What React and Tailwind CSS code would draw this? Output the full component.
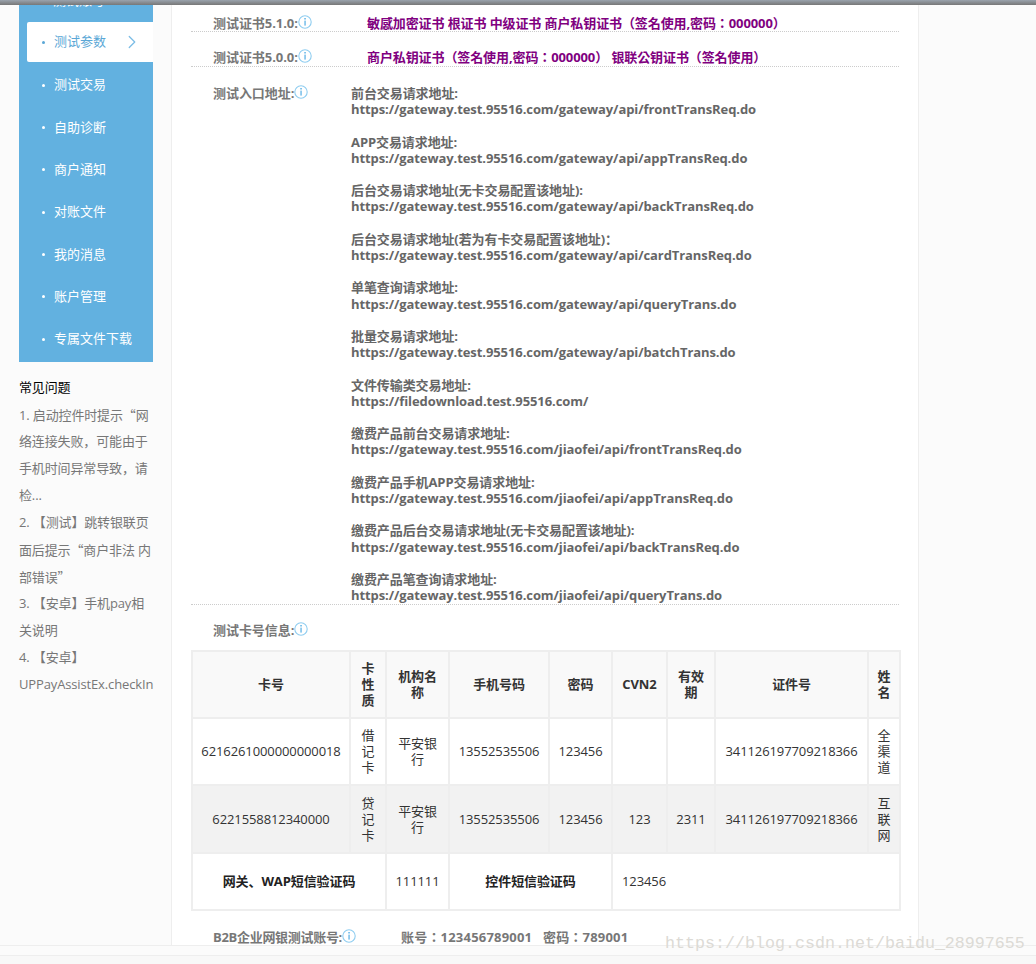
import { ChevronRight } from "lucide-react";

const FONT = "[font-family:'Open_Sans','Noto_Sans_CJK_SC',sans-serif]";
const TC_FONT = "[font-family:'Open_Sans','Noto_Sans_CJK_TC',sans-serif]";

const navItems = ["测试交易", "自助诊断", "商户通知", "对账文件", "我的消息", "账户管理", "专属文件下载"];

// curly quotes take the full em in the original, Open Sans would make them narrow
const Q = ({ children }) => <span className="[font-family:'Noto_Sans_CJK_SC',sans-serif]">{children}</span>;

const faqLines = [
  <>1. 启动控件时提示<Q>“</Q>网</>,
  "络连接失败，可能由于",
  "手机时间异常导致，请",
  "检...",
  "2. 【测试】跳转银联页",
  <>面后提示<Q>“</Q>商户非法 内</>,
  <>部错误<Q>”</Q></>,
  "3. 【安卓】手机pay相",
  "关说明",
  "4. 【安卓】",
  "UPPayAssistEx.checkIn",
];

const endpoints = [
  ["前台交易请求地址:", "https://gateway.test.95516.com/gateway/api/frontTransReq.do"],
  ["APP交易请求地址:", "https://gateway.test.95516.com/gateway/api/appTransReq.do"],
  ["后台交易请求地址(无卡交易配置该地址):", "https://gateway.test.95516.com/gateway/api/backTransReq.do"],
  ["后台交易请求地址(若为有卡交易配置该地址)：", "https://gateway.test.95516.com/gateway/api/cardTransReq.do"],
  ["单笔查询请求地址:", "https://gateway.test.95516.com/gateway/api/queryTrans.do"],
  ["批量交易请求地址:", "https://gateway.test.95516.com/gateway/api/batchTrans.do"],
  ["文件传输类交易地址:", "https://filedownload.test.95516.com/"],
  ["缴费产品前台交易请求地址:", "https://gateway.test.95516.com/jiaofei/api/frontTransReq.do"],
  ["缴费产品手机APP交易请求地址:", "https://gateway.test.95516.com/jiaofei/api/appTransReq.do"],
  ["缴费产品后台交易请求地址(无卡交易配置该地址):", "https://gateway.test.95516.com/jiaofei/api/backTransReq.do"],
  ["缴费产品笔查询请求地址:", "https://gateway.test.95516.com/jiaofei/api/queryTrans.do"],
];

const columns = [158, 36, 63, 100, 63, 55, 48, 153, 32];
const headers = ["卡号", "卡性质", "机构名称", "手机号码", "密码", "CVN2", "有效期", "证件号", "姓名"];

const cards = [
  ["6216261000000000018", "借记卡", "平安银行", "13552535506", "123456", "", "", "341126197709218366", "全渠道"],
  ["6221558812340000", "贷记卡", "平安银行", "13552535506", "123456", "123", "2311", "341126197709218366", "互联网"],
];

const InfoIcon = () => (
  <svg width="14" height="14" viewBox="0 0 14 14" className="shrink-0" fill="none">
    <circle cx="7" cy="7" r="6.2" stroke="#8fcdf0" strokeWidth="1.1" />
    <rect x="6.3" y="3" width="1.5" height="1.5" fill="#5fb3e6" />
    <rect x="6.4" y="5.6" width="1.3" height="5" fill="#5fb3e6" />
  </svg>
);

const Label = ({ children }) => (
  <span className="flex items-start text-[13px] leading-[17px] font-bold tracking-[-0.06px] text-[#777] whitespace-nowrap">
    {children}
    <InfoIcon />
  </span>
);

const Sidebar = () => (
  <aside className="w-[171px] shrink-0 pl-[19px] pr-[18px]">
    <div className="bg-[#62b1e0] pl-2 pb-[2px] text-[13px] text-white">
      <div className="h-[17px] overflow-hidden pl-[26px]">
        <div className="-mt-[13px] leading-[17px]">测试账号</div>
      </div>
      <div className="flex h-10 items-center rounded-l-[2px] bg-white pl-[15px] text-[#5aa7d6]">
        <span className="mr-2 h-[3px] w-[3px] rounded-full bg-[#5aa7d6]" />
        <span className="w-[68px] pl-[1px]">测试参数</span>
        <ChevronRight size={22} strokeWidth={1.4} className="text-[#7cbde6]" />
      </div>
      <div className="pt-[2px]">
        {navItems.map((item) => (
          <div key={item} className="flex h-[42.35px] items-center pl-[15px]">
            <span className="mr-2 h-[3px] w-[3px] rounded-full bg-white" />
            <span className="pl-[1px]">{item}</span>
          </div>
        ))}
      </div>
    </div>
    <div className="pt-[12px] text-[13px] leading-[27px] tracking-[-0.14px] whitespace-nowrap">
      <div className="h-[27px] text-black">常见问题</div>
      {faqLines.map((line, i) => (
        <div key={i} className="h-[27px] text-[#777]">
          {line}
        </div>
      ))}
    </div>
  </aside>
);

const CardTable = () => (
  <table className="w-[708px] table-fixed border-collapse text-[13px] leading-4 tracking-[-0.1px] text-[#333]">
    <colgroup>
      {columns.map((w, i) => (
        <col key={i} style={{ width: w }} />
      ))}
    </colgroup>
    <thead>
      <tr className="h-[67px] bg-[#f9f9f9]">
        {headers.map((h) => (
          <th key={h} className="border-2 border-[#eeeeee] px-2 text-center font-bold">
            {h}
          </th>
        ))}
      </tr>
    </thead>
    <tbody>
      {cards.map((row, r) => (
        <tr key={r} className={r === 1 ? "h-[68px] bg-[#f2f2f2]" : "h-[67px] bg-white"}>
          {row.map((cell, c) => (
            <td key={c} className="border-2 border-[#eeeeee] px-2 text-center">
              {cell}
            </td>
          ))}
        </tr>
      ))}
      <tr className="h-[57px] bg-white">
        <td colSpan={2} className="border-2 border-[#eeeeee] text-center font-bold text-[#222]">
          网关、WAP短信验证码
        </td>
        <td className="border-2 border-[#eeeeee] text-center">111111</td>
        <td colSpan={2} className="border-2 border-[#eeeeee] text-center font-bold text-[#222]">
          控件短信验证码
        </td>
        <td colSpan={4} className="border-2 border-[#eeeeee] pl-[9px]">
          123456
        </td>
      </tr>
    </tbody>
  </table>
);

const Main = () => (
  <main className="h-[940px] w-[748px] shrink-0 overflow-hidden border-x border-[#eeeeee] bg-white px-[19px]">
    <div className="flex h-[27px] items-start border-b border-dotted border-[#cccccc] pl-[22px] pt-[10px]">
      <div className="w-[154px]">
        <Label>测试证书5.1.0:</Label>
      </div>
      <span className={`text-[13px] leading-[17px] font-bold tracking-[-0.1px] whitespace-nowrap text-[#800080] ${TC_FONT}`}>
        敏感加密证书 根证书 中级证书 商户私钥证书（签名使用,密码：000000）
      </span>
    </div>
    <div className="flex h-[35px] items-start border-b border-dotted border-[#cccccc] pl-[22px] pt-[17px]">
      <div className="w-[154px]">
        <Label>测试证书5.0.0:</Label>
      </div>
      <span className={`text-[13px] leading-[17px] font-bold tracking-[-0.1px] whitespace-nowrap text-[#800080] ${TC_FONT}`}>
        商户私钥证书（签名使用,密码：000000） 银联公钥证书（签名使用）
      </span>
    </div>
    <div className="flex border-b border-dotted border-[#cccccc] pl-[22px] pt-[18px]">
      <div className="w-[138px]">
        <Label>测试入口地址:</Label>
      </div>
      <div className="flex flex-col gap-[16px] text-[13px] leading-[16.3px] font-bold tracking-[-0.085px] text-[#666] whitespace-nowrap">
        {endpoints.map(([title, url]) => (
          <div key={url}>
            <div>{title}</div>
            <div>{url}</div>
          </div>
        ))}
      </div>
    </div>
    <div className="pl-[22px] pt-[17px] pb-[11px]">
      <Label>测试卡号信息:</Label>
    </div>
    <CardTable />
    <div className="flex pl-[22px] pt-[18px] text-[13px] leading-[16px] font-bold text-[#777] whitespace-nowrap">
      <div className="w-[188px]">
        <Label>
          <span className="tracking-[-0.3px]">B2B企业网银测试账号:</span>
        </Label>
      </div>
      <span className={`tracking-[0.2px] ${TC_FONT}`}>账号：123456789001&nbsp;&nbsp;&nbsp;密码：789001</span>
    </div>
  </main>
);

export default function App() {
  return (
    <div className={`relative h-[964px] w-[1036px] overflow-hidden bg-[#fbfbfb] ${FONT}`}>
      <div className="h-[5px] bg-gradient-to-b from-[#9aa3ad] to-[#777]" />
      <div className="flex">
        <Sidebar />
        <Main />
      </div>
      <div className="h-[10px] border-t border-[#eeeeee]" />
      <div className="h-[9px] border-t border-[#eeeeee] bg-[#f8f8f8]" />
      <span className="absolute left-[665px] top-[934px] text-[16.67px] leading-5 whitespace-nowrap text-[#dcdad5] [font-family:'Liberation_Mono',monospace]">
        https://blog.csdn.net/baidu_28997655
      </span>
    </div>
  );
}
